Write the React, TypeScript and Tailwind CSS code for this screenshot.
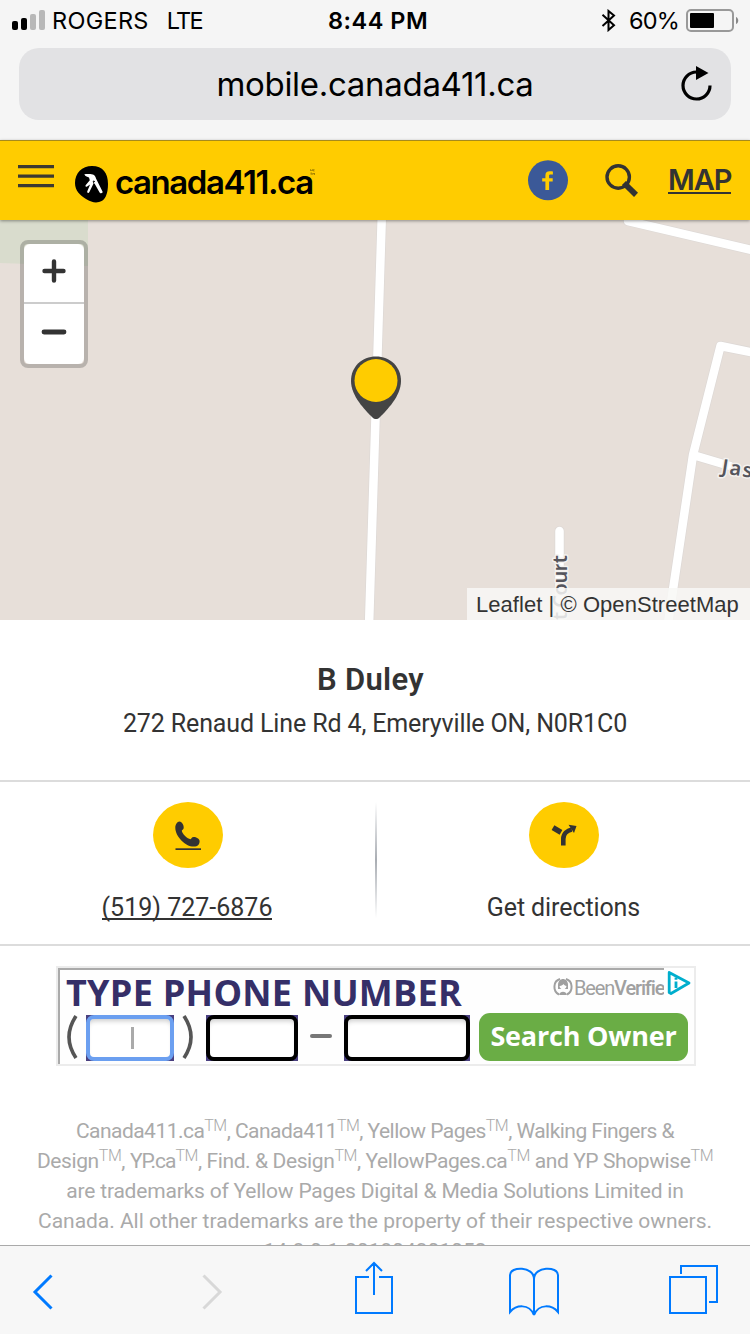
const TM = () => <sup className="-top-[0.42em] text-[16px] font-light">TM</sup>;

function StatusBar() {
  return (
    <div className="relative flex h-[48px] shrink-0 items-start justify-between pt-[7px] pr-[10px] pl-[12px] text-[23.5px] leading-[28px]">
      <div className="flex">
        <svg className="mt-[3px] mr-[8px]" width="33" height="20" viewBox="0 0 33 20">
          <rect x="0" y="11" width="6" height="9" rx="2" fill="#000" />
          <rect x="9" y="8" width="6" height="12" rx="2" fill="#000" />
          <rect x="18" y="4" width="6" height="16" rx="2" fill="#b8b8b8" />
          <rect x="27" y="0" width="6" height="20" rx="2" fill="#b8b8b8" />
        </svg>
        <span className="-ml-[1px] tracking-[0.3px]">ROGERS</span>
        <span className="ml-[18px] tracking-[-1.7px]">LTE</span>
      </div>
      <span className="absolute left-[328px] font-semibold tracking-[0.5px]">8:44 PM</span>
      <div className="flex">
        <svg className="mt-[2px] mr-[12px]" width="16" height="23" viewBox="0 0 16 23" fill="none" stroke="#000" strokeWidth="2">
          <path d="M1.5 5.8 13 16.2 7.5 21V2L13 6.6 1.5 17" />
        </svg>
        <span className="mr-[7px] tracking-[-0.8px]">60%</span>
        <svg className="mt-[2px]" width="54" height="23" viewBox="0 0 54 23">
          <rect x="1" y="1" width="46" height="21" rx="4" fill="none" stroke="#999" strokeWidth="2" />
          <rect x="4" y="4" width="24" height="15" rx="1" fill="#000" />
          <path d="M50 8c3 1 3 6 0 7z" fill="#888" />
        </svg>
      </div>
    </div>
  );
}

function AddressBar() {
  return (
    <div className="relative mx-[19px] flex h-[72px] shrink-0 items-center justify-center rounded-[20px] bg-[#e2e2e4]">
      <span className="text-[33px] leading-none tracking-[-0.3px]">mobile.canada411.ca</span>
      <svg className="absolute top-[17px] right-[18px]" width="34" height="38" viewBox="0 0 34 38">
        <path d="M17.400 7A13.500 13.500 0 1 0 31 20.500" fill="none" stroke="#000" strokeWidth="3.200" />
        <path d="M17 1 29.500 8 17 15z" fill="#000" />
      </svg>
    </div>
  );
}

function SiteHeader() {
  return (
    <header className="relative z-10 mt-[20px] flex h-[80px] shrink-0 items-start border-t border-[#a68a1c] bg-[#ffcc00] shadow-[0_1px_3px_rgba(0,0,0,0.4)]">
      <svg className="mt-[24px] ml-[18px]" width="36" height="24" viewBox="0 0 36 24" fill="#3d3a30">
        <path d="M0 0h36v3.300H0zM0 9.500h36v3.300H0zM0 19h36v3.300H0z" />
      </svg>
      <svg className="mt-[25px] ml-[21px]" width="34" height="37" viewBox="0 0 34 37">
        <path d="M17 0C7 0 0 7 0 17c0 8 5 12 11 16 5 3 9 4 13 3 6-1 9-8 9-18C33 7 28 0 17 0Z" fill="#000" />
        <path d="M9.300 8.200C12.500 8.100 15 8 17.800 8.600c1.900.6 2.600 1.900 3.200 3.900l6.500 13c.7 1.700-2 2.400-2.900.9L19.800 18l-1.500.1-3.900 8c-.9 1.600-2.700.7-2.100-.9l2.800-6.800-3 2.100c-1.400.6-2.200-.5-1.300-1.600l4-4.600-.8-2.700c-1.300-.8-3.700-1-4.700-3.400Z" fill="#fff" />
        <path d="m19 18-.8-3 1.800.6" fill="none" stroke="#000" strokeWidth=".9" />
      </svg>
      <span className="mt-[21px] ml-[6px] text-[33px] leading-[40px] font-semibold tracking-[-1.45px] text-black">canada411.ca</span>
      <svg className="mt-[28px] -ml-[3px]" width="5" height="7" viewBox="0 0 5 7" fill="none" stroke="#8a7000" strokeWidth=".7">
        <path d="M.500 2V.500L1.500 1.500 2.400.500V2M4.500.600H3.300V2h1.200M.500 4h1.500M1.200 4v2M2.800 6V4l.9 1 .8-1v2" />
      </svg>
      <div className="mr-[19px] ml-auto flex items-start">
        <svg className="mt-[19px] mr-[37px]" width="40" height="41" viewBox="0 0 40 41">
          <circle cx="20" cy="20.300" r="20" fill="#3b5998" />
          <path d="M17.400 30v-8.500h-3.200v-3.300h3.200v-2.600c0-3.200 1.500-4.400 4.200-4.400 1.300 0 2.200.1 3.300.3v3.100h-2.300c-1.300 0-1.500.5-1.500 1.500v2.100h3.600v3.300h-3.600V30z" fill="#ffcc00" />
        </svg>
        <svg className="mt-[22px] mr-[30px]" width="33" height="34" viewBox="0 0 33 34">
          <circle cx="13.200" cy="14" r="11.200" fill="none" stroke="#333" strokeWidth="3.400" />
          <path d="m21 22 8 7.800" stroke="#333" strokeWidth="5.800" strokeLinecap="square" strokeLinejoin="round" />
        </svg>
        <span className="mt-[22px] h-[31px] w-[63px] border-b-2 border-[#333] text-[29px] leading-[34px] font-semibold tracking-[-1px] text-[#333]">MAP</span>
      </div>
    </header>
  );
}

function MapView() {
  return (
    <section className="relative h-[400px] shrink-0 overflow-hidden bg-[#e7dfd9]">
      <svg className="absolute inset-0" width="750" height="400" viewBox="0 220 750 400" fill="none" strokeLinejoin="round">
        <path d="M0 220h88v46L0 263z" fill="#d9dccd" />
        <g stroke="#ded9d6" strokeWidth="10" strokeLinecap="round">
          <path d="M382 210 369 626" />
          <path d="M628 221 760 252" />
          <path d="M760 354 720.500 346 693 455 667 630M693 455 730 466" />
          <path d="M559.500 531V625" />
        </g>
        <g stroke="#fff" strokeWidth="8.500" strokeLinecap="round">
          <path d="M382 210 369 626" />
          <path d="M628 221 760 252" />
          <path d="M760 354 720.500 346 693 455 667 630M693 455 730 466" />
          <path d="M559.500 531V625" />
        </g>
        <g fill="#55555c" stroke="#f4f1ee" strokeWidth="3" paintOrder="stroke" className="font-['Noto_Sans'] text-[20px] font-semibold">
          <text transform="translate(721 473) rotate(9)" textLength="31">Jas</text>
          <text transform="translate(567 620) rotate(-90)" textLength="65">t Court</text>
        </g>
        <path d="M376 356.500c14 0 25 10 25 24.500 0 15-14 29-21.500 36.500-2 2-5 2-7 0C365 410 351 396 351 381c0-14.500 11-24.500 25-24.500Z" fill="#444" />
        <circle cx="376" cy="380.500" r="21.500" fill="#ffcc00" />
      </svg>
      <div className="absolute top-[20px] left-[20px] flex h-[128px] w-[68px] flex-col rounded-[8px] border-4 border-black/20 bg-clip-padding">
        <div className="flex h-[60px] shrink-0 items-center justify-center rounded-t-[6px] border-b-2 border-[#ccc] bg-white">
          <svg className="-mt-[5px]" width="24" height="24" viewBox="0 0 24 24" stroke="#333" strokeWidth="4.400" strokeLinecap="round"><path d="M12 2.500v19M2.500 12h19" /></svg>
        </div>
        <div className="flex h-[60px] items-center justify-center rounded-b-[6px] bg-white">
          <svg className="-mt-[5px]" width="26" height="6" viewBox="0 0 26 6" stroke="#333" strokeWidth="4.800" strokeLinecap="round"><path d="M3 3h20" /></svg>
        </div>
      </div>
      <div className="absolute right-0 bottom-0 h-[32px] w-[283px] bg-[#f8f8f6]/85 pl-[9px] font-['Liberation_Sans',sans-serif] text-[22px] leading-[33px] tracking-[0.05px] whitespace-nowrap text-[#333]">
        Leaflet | © OpenStreetMap
      </div>
    </section>
  );
}

function Listing() {
  return (
    <section className="flex h-[162px] shrink-0 flex-col items-center border-b-2 border-[#dcdcdc] pt-[40px] font-['Roboto',sans-serif] text-[#333]">
      <h1 className="mr-[9px] text-[31px] leading-[40px] font-semibold tracking-[0.3px]">B Duley</h1>
      <p className="mt-[6px] text-[25px] leading-[36px] tracking-[-0.13px] whitespace-nowrap">272 Renaud Line Rd 4, Emeryville ON, N0R1C0</p>
    </section>
  );
}

function Actions() {
  return (
    <section className="flex h-[164px] shrink-0 items-start border-b-2 border-[#dcdcdc] pt-[20px] font-['Roboto',sans-serif] text-[25px] leading-[30px] text-[#333]">
      <div className="flex w-[375px] flex-col items-center">
        <span className="ml-[1px] flex h-[66px] w-[70px] items-center justify-center rounded-[50%] bg-[#ffcc00]">
          <svg width="28" height="30" viewBox="0 0 28 30" fill="#333" className="mt-[2px]">
            <path d="M5.500.500C7.500.500 10 3.500 9.700 7c-.1 1.600-2 2-1.900 2.800.3 2.900 5.700 8.200 8.700 8.400 1-.2 1-2.300 3.200-2.300 2.500 0 5.900 2 5.900 4 0 3.200-1.600 5.700-6 5.700C11.500 25.600 1.300 15.500 1.300 6.700c0-3 1.800-6.200 4.200-6.200Z" />
            <path d="M1.500 27.300h25.500v1.700H1.500z" />
          </svg>
        </span>
        <span className="mt-[26px] -ml-px h-[26px] border-b-2 border-[#333] leading-[27px]">(519) 727-6876</span>
      </div>
      <div className="h-[116px] w-[2px] bg-linear-to-b from-white via-[#a9adb3] via-50% to-white" />
      <div className="flex w-[373px] flex-col items-center">
        <span className="flex h-[66px] w-[70px] items-center justify-center rounded-[50%] bg-[#ffcc00]">
          <svg width="26" height="24" viewBox="0 0 26 24" fill="none" stroke="#333" strokeWidth="4.600">
            <path d="M2 4.600 10 9.300" strokeWidth="5.400" />
            <path d="M12.300 22.500V16c0-5 4-8.600 8.500-9.500" />
            <path d="M17.500 1.800 25.500 3l-2.500 7z" fill="#333" stroke="none" />
          </svg>
        </span>
        <span className="mt-[25px] tracking-[-0.1px]">Get directions</span>
      </div>
    </section>
  );
}

function Ad() {
  return (
    <aside className="mt-[20px] ml-[56px] h-[100px] w-[640px] shrink-0 border-2 border-[#ececec] font-['Open_Sans',sans-serif]">
      <div className="relative flex h-[96px] flex-col border-t-2 border-l-2 border-[#aaa] bg-[#fefefe]">
        <div className="flex h-[44px] items-start">
          <span className="ml-[6px] text-[36px] leading-[46px] font-bold tracking-[0.26px] whitespace-nowrap text-[#352f68]">TYPE PHONE NUMBER</span>
          <svg className="mt-[8px] ml-[91px] shrink-0" width="20" height="18" viewBox="0 0 20 18">
            <path d="M7 1C0 3-.5 13 6 16.500M13 1c7 2 7.500 12 1 15.500" fill="none" stroke="#a0a0a0" strokeWidth="2" />
            <path d="M5 7C5-1 15-1 15 7v4H5z" fill="#a0a0a0" />
            <path d="M6.500 8c2.500-.3 3-1 4-2 .6 1 1.500 1.700 3 2-.5 4.500-6.500 4.500-7 0Z" fill="#fff" />
            <path d="M6 17c1-4.500 7-4.500 8 0z" fill="#a0a0a0" />
          </svg>
          <span className="mt-[6px] ml-px w-[90px] overflow-hidden font-['Roboto',sans-serif] text-[20px] leading-[24px] tracking-[-1.15px] whitespace-nowrap text-[#a0a0a0]">Been<span className="font-medium">Verifie</span></span>
        </div>
        <div className="flex h-[47px] items-center">
          <svg className="ml-[6px]" width="12" height="46" viewBox="0 0 12 46" fill="none" stroke="#555" strokeWidth="3.600"><path d="M10 1Q-4 22 10 43" /></svg>
          <span className="ml-[8px] block h-[46px] w-[88px] bg-[#4a4080]"><span className="flex h-full items-center justify-center rounded-[8px] border-4 border-[#6b9ff0] bg-white shadow-[inset_0_5px_5px_-3px_#ccc]"><span className="mr-[-5px] h-[22px] w-[3px] bg-[#aaa]" /></span></span>
          <svg className="ml-[8px]" width="14" height="46" viewBox="0 0 14 46" fill="none" stroke="#555" strokeWidth="3.600"><path d="M2 1Q16 22 2 43" /></svg>
          <span className="ml-[10px] block h-[46px] w-[92px] bg-[#4a4080]"><span className="block h-full rounded-[8px] border-4 border-black bg-white shadow-[inset_0_5px_5px_-3px_#ccc]" /></span>
          <span className="mx-[12px] -mt-[4px] h-[4px] w-[22px] rounded-full bg-[#777]" />
          <span className="block h-[46px] w-[126px] bg-[#4a4080]"><span className="block h-full rounded-[8px] border-4 border-black bg-white shadow-[inset_0_5px_5px_-3px_#ccc]" /></span>
          <span className="-mt-[2px] ml-[9px] flex h-[48px] w-[209px] items-center justify-center rounded-[11px] bg-[#6aad45] pb-[1px] text-[27px] font-bold tracking-[-0.2px] whitespace-nowrap text-white">Search Owner</span>
        </div>
        <span className="absolute -top-[2px] right-0 flex h-[32px] w-[30px] items-start bg-white pt-[2px] pl-[3px]">
          <svg width="26" height="26" viewBox="0 0 26 26" fill="none" stroke="#00aecd" strokeWidth="2.800" strokeLinejoin="round">
            <path d="M2.200 2.500 22 13 4 23.500 2.200 22.500z" /><path d="M9 11.500v6.500M9 7.500v2.300" />
          </svg>
        </span>
      </div>
    </aside>
  );
}

function Legal() {
  return (
    <footer className="mt-[50px] text-center font-['Roboto',sans-serif] text-[21px] leading-[30px] whitespace-nowrap text-[#aaa]">
      <p className="tracking-[-0.53px]">Canada411.ca<TM />, Canada411<TM />, Yellow Pages<TM />, Walking Fingers &amp;</p>
      <p className="tracking-[-0.4px]">Design<TM />, <span className="tracking-[-1px]">YP.ca</span><TM />, Find. &amp; Design<TM />, YellowPages.ca<TM /> and YP Shopwise<TM /></p>
      <p className="tracking-[-0.2px]">are trademarks of Yellow Pages Digital &amp; Media Solutions Limited in</p>
      <p className="tracking-[-0.03px]">Canada. All other trademarks are the property of their respective owners.</p>
      <p>14.8.0.1-201804301052</p>
    </footer>
  );
}

function Toolbar() {
  return (
    <nav className="flex h-[89px] shrink-0 items-start border-t border-[#aaa] bg-[#f7f7f7]">
      <svg className="mt-[27px] ml-[32px]" width="22" height="38" viewBox="0 0 22 38" fill="none" stroke="#007aff" strokeWidth="3"><path d="M19.500 2.500 3 19l16.500 16.500" /></svg>
      <svg className="mt-[27px] ml-[147px]" width="22" height="38" viewBox="0 0 22 38" fill="none" stroke="#d8d8d8" strokeWidth="3"><path d="M2.500 2.500 19 19 2.500 35.500" /></svg>
      <svg className="mt-[15px] ml-[132px]" width="38" height="54" viewBox="0 0 38 54" fill="none" stroke="#007aff" strokeWidth="2"><path d="M14 16H1v36h36V16H24M19 34V2M11 10l8-8 8 8" /></svg>
      <svg className="mt-[21px] ml-[116px]" width="50" height="50" viewBox="0 0 50 50" fill="none" stroke="#007aff" strokeWidth="2"><path d="M25 48V12M25 12C25-1 1-1 1 8v37C7 38 20 36 25 48M25 12C25-1 49-1 49 8v37C43 38 30 36 25 48" /></svg>
      <svg className="mt-[19px] ml-[110px]" width="50" height="50" viewBox="0 0 50 50" fill="none" stroke="#007aff" strokeWidth="2"><path d="M1 12h36v36H1zM12 9V1h36v36h-8" /></svg>
    </nav>
  );
}

export default function App() {
  return (
    <div className="flex h-[1334px] w-[750px] flex-col overflow-hidden bg-[#f5f5f5] font-['Inter',sans-serif] text-black">
      <StatusBar />
      <AddressBar />
      <SiteHeader />
      <main className="flex min-h-0 flex-1 flex-col overflow-hidden bg-white">
        <MapView />
        <Listing />
        <Actions />
        <Ad />
        <Legal />
      </main>
      <Toolbar />
    </div>
  );
}
